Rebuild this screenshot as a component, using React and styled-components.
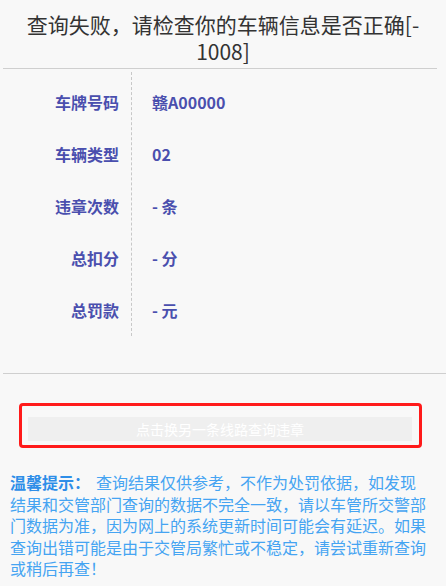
import React from 'react';
import styled, { createGlobalStyle } from 'styled-components';

const GlobalStyle = createGlobalStyle`
    html, body {
        margin: 0;
        padding: 0;
        background: #f8f8f8;
    }
    body {
        font-family: "Noto Sans CJK SC", "Noto Sans", sans-serif;
    }
`;

const Page = styled.div`
    width: 446px;
    min-height: 586px;
    background: #f8f8f8;
`;

const Title = styled.h1`
    margin: 0;
    padding: 11px 20px 0;
    font-size: 21px;
    line-height: 27px;
    font-weight: normal;
    color: #333;
    text-align: center;
`;

const Divider = styled.hr`
    margin: ${({ top }) => top}px ${({ right }) => right}px 0 3px;
    border: none;
    border-top: 1px solid #cfcfcf;
    height: 0;
`;

const InfoTable = styled.div`
    display: flex;
    margin-top: 3px;
`;

const LabelCol = styled.div`
    width: 132px;
    box-sizing: border-box;
    padding: 4px 12px 0 0;
    border-right: 1px dashed #c8c8c8;
    text-align: right;
`;

const ValueCol = styled.div`
    padding: 4px 0 0 20px;
`;

const Cell = styled.div`
    height: 52px;
    line-height: 52px;
    font-size: 16px;
    font-weight: bold;
    color: #4a4fae;
    white-space: nowrap;
`;

const Highlight = styled.div`
    margin: 29px 0 0 19px;
    width: 403px;
    box-sizing: border-box;
    border: 3px solid #ff1a1a;
    border-radius: 4px;
    padding: 11px 7px 4px 6px;
`;

const SwitchButton = styled.button`
    display: block;
    width: 100%;
    height: 24px;
    padding: 0;
    border: none;
    background: #efefef;
    color: #fff;
    font-family: inherit;
    font-size: 14px;
    line-height: 24px;
    text-align: center;
    cursor: pointer;
`;

const Tip = styled.p`
    margin: 24px 0 0;
    padding: 0 18px 0 10px;
    font-size: 16px;
    line-height: 21.5px;
    color: #45a4f2;
`;

const TipLabel = styled.strong`
    margin-right: 6px;
    color: #2e8ee8;
`;

const TipBody = styled.span``;

const rows = [
    ['车牌号码', '赣A00000'],
    ['车辆类型', '02'],
    ['违章次数', '- 条'],
    ['总扣分', '- 分'],
    ['总罚款', '- 元'],
];

const App = () => {
    return (
        <Page>
            <GlobalStyle />
            <Title>
                查询失败，请检查你的车辆信息是否正确[-
                <br />
                1008]
            </Title>
            <Divider top={3} right={9} />
            <InfoTable>
                <LabelCol>
                    {rows.map(([label]) => (
                        <Cell key={label}>{label}</Cell>
                    ))}
                </LabelCol>
                <ValueCol>
                    {rows.map(([label, value]) => (
                        <Cell key={label}>{value}</Cell>
                    ))}
                </ValueCol>
            </InfoTable>
            <Divider top={37} right={0} />
            <Highlight>
                <SwitchButton>点击换另一条线路查询违章</SwitchButton>
            </Highlight>
            <Tip>
                <TipLabel>温馨提示：</TipLabel>
                <TipBody>
                    查询结果仅供参考，不作为处罚依据，如发现结果和交管部门查询的数据不完全一致，请以车管所交警部门数据为准，因为网上的系统更新时间可能会有延迟。如果查询出错可能是由于交管局繁忙或不稳定，请尝试重新查询或稍后再查！
                </TipBody>
            </Tip>
        </Page>
    );
};

export default App;
